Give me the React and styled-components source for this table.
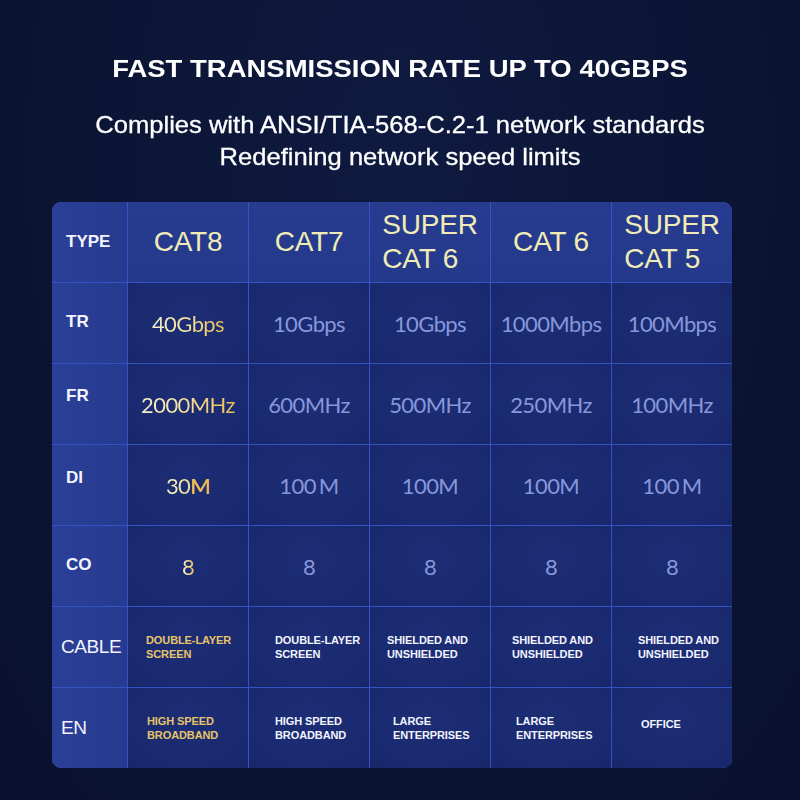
import React from 'react';
import styled, { createGlobalStyle } from 'styled-components';

const colors = {
  page: '#0b1433',
  line: '#3553c4',
  head: '#263b8f',
  side: '#293e93',
  body: '#1a2a70',
  cream: '#f1ecb6',
  muted: '#8797da',
  white: '#f2f4ff',
  gold: '#e6c46a'
};

const GlobalStyle = createGlobalStyle`
  html, body {
    margin: 0;
    padding: 0;
    background: ${colors.page};
  }
`;

const headers = [
  ['CAT8'],
  ['CAT7'],
  ['SUPER', 'CAT 6'],
  ['CAT 6'],
  ['SUPER', 'CAT 5']
];

const valueRows = [
  { label: 'TR', lift: 2, values: ['40Gbps', '10Gbps', '10Gbps', '1000Mbps', '100Mbps'] },
  { label: 'FR', lift: 16, values: ['2000MHz', '600MHz', '500MHz', '250MHz', '100MHz'] },
  { label: 'DI', lift: 14, values: ['30M', '100 M', '100M', '100M', '100 M'] },
  { label: 'CO', lift: 2, values: ['8', '8', '8', '8', '8'] }
];

const textRows = [
  {
    label: 'CABLE',
    cells: [
      { lines: ['DOUBLE-LAYER', 'SCREEN'], pad: 18 },
      { lines: ['DOUBLE-LAYER', 'SCREEN'], pad: 26 },
      { lines: ['SHIELDED AND', 'UNSHIELDED'], pad: 17 },
      { lines: ['SHIELDED AND', 'UNSHIELDED'], pad: 21 },
      { lines: ['SHIELDED AND', 'UNSHIELDED'], pad: 26 }
    ]
  },
  {
    label: 'EN',
    cells: [
      { lines: ['HIGH SPEED', 'BROADBAND'], pad: 19 },
      { lines: ['HIGH SPEED', 'BROADBAND'], pad: 26 },
      { lines: ['LARGE', 'ENTERPRISES'], pad: 23 },
      { lines: ['LARGE', 'ENTERPRISES'], pad: 25 },
      { lines: ['OFFICE'], pad: 29, lift: 8 }
    ]
  }
];

// "30M" has the unit in gold, "100 M" keeps a small gap before the unit
const renderValue = (value, hot) => {
  const m = value.match(/^(\d+)( ?)M$/);
  if (m) {
    return (
      <>
        {m[1]}
        <Unit hot={hot} gap={m[2] === ' '}>M</Unit>
      </>
    );
  }
  return value;
};

const App = () => {
  return (
    <Page>
      <GlobalStyle />
      <Title>FAST TRANSMISSION RATE UP TO 40GBPS</Title>
      <Subtitle>
        Complies with ANSI/TIA-568-C.2-1 network standards
        <br />
        Redefining network speed limits
      </Subtitle>
      <Table>
        <SideCell>
          <SideLabel>TYPE</SideLabel>
        </SideCell>
        {headers.map((h, i) => (
          <HeadCell key={i}>
            <HeadText>
              {h.map((line, j) => (
                <div key={j}>{line}</div>
              ))}
            </HeadText>
          </HeadCell>
        ))}

        {valueRows.map((row) => (
          <React.Fragment key={row.label}>
            <SideCell>
              <SideLabel lift={row.lift}>{row.label}</SideLabel>
            </SideCell>
            {row.values.map((v, i) => (
              <BodyCell key={i}>
                <Value hot={i === 0}>{renderValue(v, i === 0)}</Value>
              </BodyCell>
            ))}
          </React.Fragment>
        ))}

        {textRows.map((row) => (
          <React.Fragment key={row.label}>
            <SideCell large>
              <SideLabel large>{row.label}</SideLabel>
            </SideCell>
            {row.cells.map((c, i) => (
              <BodyCell key={i} left pad={c.pad}>
                <SmallText hot={i === 0} lift={c.lift}>
                  {c.lines.map((line, j) => (
                    <div key={j}>{line}</div>
                  ))}
                </SmallText>
              </BodyCell>
            ))}
          </React.Fragment>
        ))}
      </Table>
    </Page>
  );
};

const Page = styled.div`
  width: 800px;
  height: 800px;
  box-sizing: border-box;
  padding-top: 55px;
  background: radial-gradient(ellipse at 50% 20%, #0f1a40 0%, ${colors.page} 60%, #0a1130 100%);
  font-family: 'Liberation Sans', Arial, sans-serif;
  color: ${colors.white};
  overflow: hidden;
`;

const Title = styled.h1`
  margin: 0;
  text-align: center;
  font-size: 24px;
  line-height: 28px;
  font-weight: 700;
  color: #ffffff;
  transform: scaleX(1.145);
`;

const Subtitle = styled.p`
  margin: 26px 0 29px;
  text-align: center;
  font-size: 24px;
  line-height: 32px;
  color: #ffffff;
  -webkit-text-stroke: 0.3px #ffffff;
  transform: scaleX(1.065);
`;

const Table = styled.div`
  margin-left: 52px;
  width: 680px;
  display: grid;
  grid-template-columns: 75px repeat(5, 1fr);
  grid-template-rows: repeat(7, 80px);
  gap: 1px;
  background: ${colors.line};
  border-radius: 9px;
  overflow: hidden;
`;

const SideCell = styled.div`
  display: flex;
  align-items: center;
  padding-left: ${(p) => (p.large ? 9 : 14)}px;
  background: linear-gradient(90deg, #2b3f97 0%, #263b8f 100%);
`;

const SideLabel = styled.span`
  font-size: ${(p) => (p.large ? 19 : 17)}px;
  font-weight: ${(p) => (p.large ? 400 : 700)};
  letter-spacing: ${(p) => (p.large ? '-0.4px' : '0')};
  color: ${colors.white};
  margin-bottom: ${(p) => p.lift || 0}px;
`;

const HeadCell = styled.div`
  display: flex;
  align-items: center;
  justify-content: center;
  background: linear-gradient(180deg, #273c90 0%, #24398b 100%);
`;

const HeadText = styled.div`
  text-align: left;
  font-size: 28px;
  line-height: 34px;
  color: ${colors.cream};
  letter-spacing: -0.2px;
`;

const BodyCell = styled.div`
  display: flex;
  align-items: center;
  justify-content: ${(p) => (p.left ? 'flex-start' : 'center')};
  padding-left: ${(p) => p.pad || 0}px;
  background: radial-gradient(ellipse at 50% 40%, #1c2d75 0%, ${colors.body} 70%, #18276a 100%);
`;

const Value = styled.span`
  font-family: Lato, 'Noto Sans', sans-serif;
  font-size: 22px;
  letter-spacing: -0.6px;
  color: ${colors.muted};
  ${(p) =>
    p.hot &&
    `
    background: linear-gradient(90deg, #f7f3d0 0%, #f2dc92 55%, #ecbd55 100%);
    -webkit-background-clip: text;
    background-clip: text;
    color: transparent;
  `}
`;

const Unit = styled.span`
  margin-left: ${(p) => (p.gap ? 3 : 0)}px;
  ${(p) =>
    p.hot &&
    `
    color: #ebbf52;
    -webkit-text-fill-color: #ebbf52;
  `}
`;

const SmallText = styled.div`
  font-size: 11px;
  line-height: 14px;
  font-weight: 700;
  letter-spacing: -0.1px;
  margin-bottom: ${(p) => p.lift || 0}px;
  color: ${(p) => (p.hot ? colors.gold : colors.white)};
`;

export default App;
